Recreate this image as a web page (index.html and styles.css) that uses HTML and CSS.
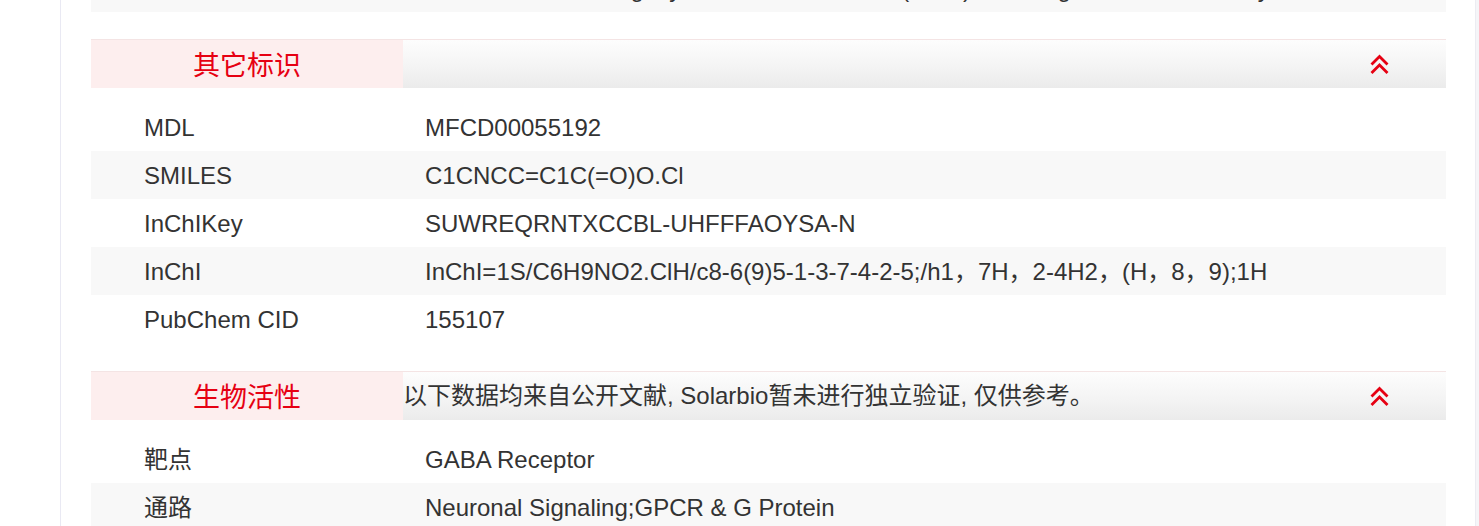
FILE: index.html
```html
<!DOCTYPE html>
<html lang="zh-CN">
<head>
<meta charset="utf-8">
<title>其它标识</title>
<link rel="stylesheet" href="styles.css">
</head>
<body>
<div class="page">
  <div class="content">
    <div class="row gray row-cut">
      <div class="label">溶解性</div>
      <div class="value">Soluble in water, slightly soluble in methanol (25°C) at 10 mg/ml, insoluble, very</div>
    </div>

    <section class="block">
      <div class="block-head">
        <div class="block-title">其它标识</div>
        <div class="block-note"></div>
        <svg class="toggle" width="19" height="20" viewBox="0 0 19 20" aria-hidden="true">
          <polyline points="1.5,10.5 9.5,2.5 17.5,10.5" />
          <polyline points="1.5,19 9.5,11 17.5,19" />
        </svg>
      </div>
      <div class="rows">
        <div class="row"><div class="label">MDL</div><div class="value">MFCD00055192</div></div>
        <div class="row gray"><div class="label">SMILES</div><div class="value">C1CNCC=C1C(=O)O.Cl</div></div>
        <div class="row"><div class="label">InChIKey</div><div class="value">SUWREQRNTXCCBL-UHFFFAOYSA-N</div></div>
        <div class="row gray"><div class="label">InChI</div><div class="value">InChI=1S/C6H9NO2.ClH/c8-6(9)5-1-3-7-4-2-5;/h1，7H，2-4H2，(H，8，9);1H</div></div>
        <div class="row"><div class="label">PubChem CID</div><div class="value">155107</div></div>
      </div>
    </section>

    <section class="block">
      <div class="block-head">
        <div class="block-title">生物活性</div>
        <div class="block-note">以下数据均来自公开文献, Solarbio暂未进行独立验证, 仅供参考。</div>
        <svg class="toggle" width="19" height="20" viewBox="0 0 19 20" aria-hidden="true">
          <polyline points="1.5,10.5 9.5,2.5 17.5,10.5" />
          <polyline points="1.5,19 9.5,11 17.5,19" />
        </svg>
      </div>
      <div class="rows">
        <div class="row"><div class="label">靶点</div><div class="value">GABA Receptor</div></div>
        <div class="row gray"><div class="label">通路</div><div class="value">Neuronal Signaling;GPCR &amp; G Protein</div></div>
      </div>
    </section>
  </div>
  <div class="gutter"></div>
</div>
</body>
</html>
```

FILE: styles.css
```css
html, body {
  margin: 0;
  padding: 0;
  background: #ffffff;
  height: 100%;
  overflow: hidden;
}

body {
  font-family: "Liberation Sans", "Noto Sans CJK SC", sans-serif;
  color: #333333;
}

.page {
  display: flex;
  min-height: 100%;
  padding-left: 60px;
}

.content {
  flex: 1;
  border-left: 1px solid #e9e9f3;
  border-right: 1px solid #ececf2;
  padding: 0 29px 0 30px;
  background: #ffffff;
}

.gutter {
  width: 3px;
  background: #f5f5f8;
}

.row {
  display: flex;
  box-sizing: border-box;
  height: 48px;
  padding-top: 2px;
  line-height: 46px;
  font-size: 24px;
  white-space: nowrap;
  overflow: hidden;
}

.row.gray {
  background: #f8f8f8;
}

.row-cut {
  margin-top: -36px;
}

.label {
  width: 281px;
  padding-left: 53px;
  flex: none;
}

.value {
  flex: 1;
}

.block {
  margin-top: 27px;
}

.block-head {
  display: flex;
  align-items: center;
  height: 48px;
  border-top: 1px solid #f4e4e4;
  background: linear-gradient(to bottom, #fdfdfd 0%, #f4f4f4 55%, #ebebeb 100%);
}

.block-title {
  width: 312px;
  height: 48px;
  line-height: 48px;
  flex: none;
  text-align: center;
  background: #fdeeee;
  color: #e60012;
  font-size: 27px;
  font-family: "Noto Sans CJK SC", sans-serif;
}

.block-note {
  flex: 1;
  font-size: 24px;
  line-height: 48px;
  color: #333333;
  white-space: nowrap;
}

.toggle {
  flex: none;
  margin-right: 57px;
  fill: none;
  stroke: #e60012;
  stroke-width: 2.8;
  stroke-linecap: butt;
  stroke-linejoin: miter;
}

.rows {
  padding-top: 15px;
  padding-bottom: 1px;
}
```
